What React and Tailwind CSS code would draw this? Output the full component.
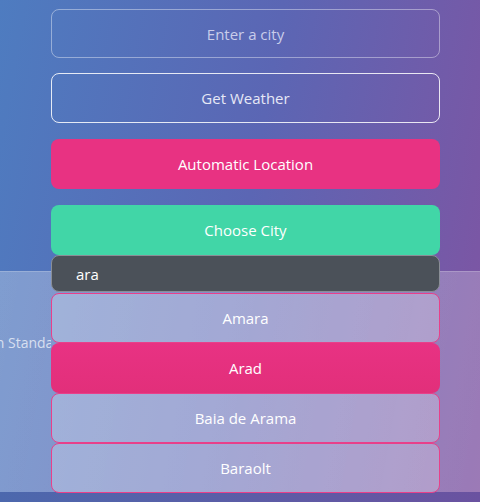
import React, { useState } from 'react';

const cities = ['Amara', 'Arad', 'Baia de Arama', 'Baraolt'];

const App = () => {
    const [city, setCity] = useState('');
    const [query, setQuery] = useState('ara');
    const [active, setActive] = useState('Arad');

    return (
        <div
            className="relative h-[502px] w-[480px] overflow-hidden bg-[linear-gradient(100deg,#4e7cc0_0%,#5b66b4_50%,#8054a2_100%)] text-[15px] text-white"
            style={{ fontFamily: '"Open Sans", "Noto Sans", sans-serif' }}
        >
            {/* search form */}
            <div className="ml-[51px] flex w-[389px] flex-col pt-[9px]">
                <input
                    value={city}
                    onChange={(e) => setCity(e.target.value)}
                    placeholder="Enter a city"
                    className="h-[49px] w-full rounded-lg border border-white/40 bg-transparent text-center text-white placeholder:text-[#c9cdea] focus:outline-none"
                />
                <button className="mt-[15px] h-[50px] w-full rounded-lg border border-white/85 text-[#e6e8f6]">
                    Get Weather
                </button>
                <button className="mt-[16px] h-[50px] w-full rounded-lg bg-[#e83282] text-white">
                    Automatic Location
                </button>
                <div className="relative z-10 mt-[16px]">
                    <button className="h-[50px] w-full rounded-lg bg-[#41d6a7] text-white">
                        Choose City
                    </button>
                    {/* dropdown menu */}
                    <div className="absolute left-0 top-full w-full">
                        <input
                            value={query}
                            onChange={(e) => setQuery(e.target.value)}
                            className="h-[37px] w-full rounded-lg border border-[#8a8e96] bg-[#4b5159] pl-[24px] text-white focus:outline-none"
                        />
                        <ul className="mt-[1px]">
                            {cities.map((c) => (
                                <li key={c}>
                                    <button
                                        onClick={() => setActive(c)}
                                        className={
                                            c === active
                                                ? 'h-[50px] w-full rounded-lg bg-[linear-gradient(180deg,#e83283,#e22f7a)] text-white'
                                                : 'h-[50px] w-full rounded-lg border border-[#e8408a] bg-white/25 text-white'
                                        }
                                    >
                                        {c}
                                    </button>
                                </li>
                            ))}
                        </ul>
                    </div>
                </div>
            </div>

            {/* weather panel */}
            <div className="mt-[16px] h-[221px] w-full border-t border-white/20 bg-[linear-gradient(100deg,rgba(255,255,255,0.27),rgba(255,255,255,0.22))]">
                <div className="w-[51px] overflow-hidden pt-[60px]">
                    <p className="-ml-[112px] whitespace-nowrap text-[14px] text-white/70">
                        Eastern European Standard Time
                    </p>
                </div>
            </div>
            <div className="h-[10px] w-full bg-[linear-gradient(90deg,#4c68ad,#6a52a0)]" />
        </div>
    );
};

export default App;
